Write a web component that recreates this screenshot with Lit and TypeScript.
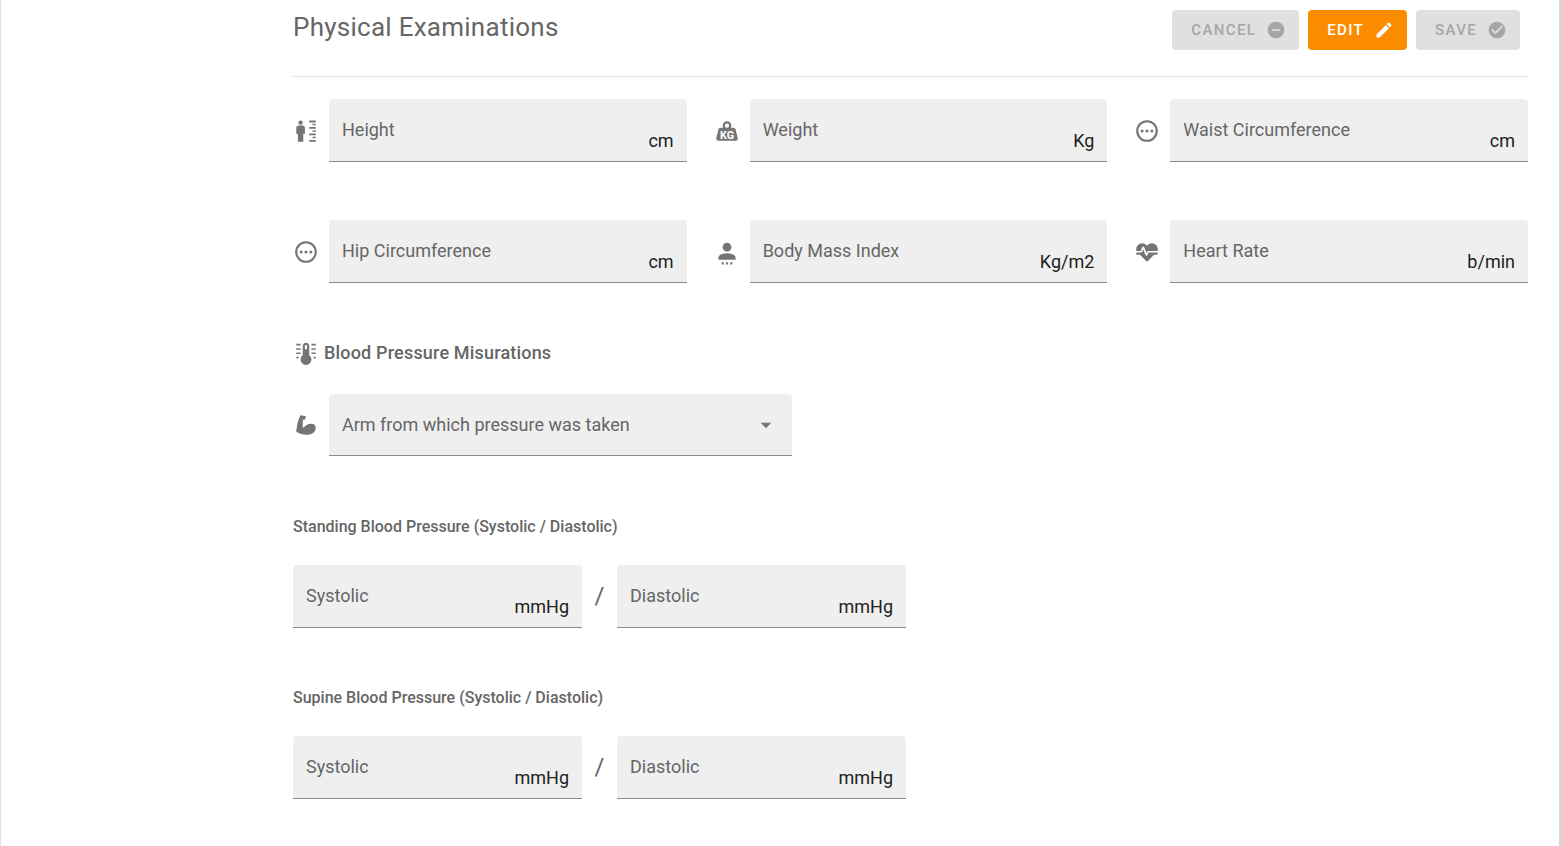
import { LitElement, html, css, svg, nothing } from "lit";
import { customElement, property } from "lit/decorators.js";

const dot = (cx: number) => svg`<circle cx=${cx} cy="12" r="1.4" />`;

const icons: Record<string, unknown> = {
  cancel: svg`<path d="M17,13H7V11H17M12,2A10,10 0 0,0 2,12A10,10 0 0,0 12,22A10,10 0 0,0 22,12A10,10 0 0,0 12,2Z" />`,
  edit: svg`<path d="M20.71,7.04C21.1,6.65 21.1,6 20.71,5.63L18.37,3.29C18,2.9 17.35,2.9 16.96,3.29L15.12,5.12L18.87,8.87M3,17.25V21H6.75L17.81,9.93L14.06,6.18L3,17.25Z" />`,
  save: svg`<path d="M12 2C6.5 2 2 6.5 2 12S6.5 22 12 22 22 17.5 22 12 17.5 2 12 2M10 17L5 12L6.41 10.59L10 14.17L17.59 6.58L19 8L10 17Z" />`,
  height: svg`<circle cx="7" cy="4.300" r="2" /><path d="M5 7H9A2 2 0 0 1 11 9V14.500H9.500V22H4.500V14.500H3V9A2 2 0 0 1 5 7Z" />
    <path d="M15 2.300H21V4.100H15ZM18 5.300H21V6.800H18ZM15 8.200H21V10H15ZM18 11.300H21V12.800H18ZM15 14.200H21V16H15ZM18 17.300H21V18.800H18ZM15 20.200H21V22H15Z" />`,
  weight: svg`<path fill-rule="evenodd" d="M12,3A4,4 0 0,1 16,7C16,7.73 15.81,8.41 15.46,9H18C18.95,9 19.75,9.67 19.95,10.56C21.96,18.57 22,18.78 22,19A2,2 0 0,1 20,21H4A2,2 0 0,1 2,19C2,18.78 2.04,18.57 4.05,10.56C4.25,9.67 5.05,9 6,9H8.54C8.19,8.41 8,7.73 8,7A4,4 0 0,1 12,3M12,5A2,2 0 0,0 10,7A2,2 0 0,0 12,9A2,2 0 0,0 14,7A2,2 0 0,0 12,5Z" />
    <text class="kg" x="12" y="19" text-anchor="middle">KG</text>`,
  circle: svg`<circle cx="12" cy="12" r="9" fill="none" stroke="currentColor" stroke-width="2" />${dot(7.5)}${dot(12)}${dot(16.5)}`,
  person: svg`<circle cx="12" cy="7.500" r="4" /><path d="M12 13.200C16.420 13.200 20 15 20 17.200V19.200H4V17.200C4 15 7.580 13.200 12 13.200ZM7 21.500H9V23.500H7ZM11 21.500H13V23.500H11ZM15 21.500H17V23.500H15Z" />`,
  heart: svg`<path d="M7.5,4A5.5,5.5 0 0,0 2,9.5C2,10 2.09,10.5 2.22,11H6.3L7.57,7.63C7.87,6.83 9.05,6.75 9.43,7.63L11.5,13L12.09,11.58C12.22,11.25 12.57,11 13,11H21.78C21.91,10.5 22,10 22,9.5A5.5,5.5 0 0,0 16.5,4C14.64,4 13,4.93 12,6.34C11,4.93 9.36,4 7.5,4V4M3,12.5A1,1 0 0,0 2,13.5A1,1 0 0,0 3,14.5H5.44L11,20C12,20.9 12,20.9 13,20L18.56,14.5H21A1,1 0 0,0 22,13.5A1,1 0 0,0 21,12.5H13.4L12.47,14.8C12.07,15.81 10.92,15.67 10.55,14.83L8.5,9.5L7.54,11.83C7.39,12.21 7.05,12.5 6.6,12.5H3Z" />`,
  thermometer: svg`<path fill-rule="evenodd" d="M17 18C17 20.760 14.760 23 12 23S7 20.760 7 18C7 16.360 7.790 14.910 9 14V5.500C9 3.840 10.340 2.500 12 2.500S15 3.840 15 5.500V14C16.210 14.910 17 16.360 17 18M11 8.500H13V5.500C13 4.950 12.550 4.500 12 4.500S11 4.950 11 5.500Z" />
    <path d="M17 3.500H21V5H17ZM17 7.500H21V9H17ZM17 11.500H21V13H17ZM21 15.500V17H19.200L18.600 15.500ZM3 3.500H7V5H3ZM3 7.500H7V9H3ZM3 11.500H7V13H3ZM3 15.500H5.400L4.800 17H3Z" />`,
  arm: svg`<path d="M3 18.34C3 18.34 4 7.09 7 3L12 4L11 7.09H9V14.25H10C12 11.18 16.14 10.06 18.64 11.18C21.94 12.71 21.64 17.32 18.64 19.36C16.24 21 9 22.43 3 18.34Z" />`,
  menu: svg`<path d="M7,10L12,15L17,10H7Z" />`,
};

@customElement("app-icon")
class AppIcon extends LitElement {
  static styles = css`
    :host { display: block; flex: none; width: 26px; height: 26px; }
    .icon { display: block; width: 100%; height: 100%; fill: currentColor; }
    .kg { font: bold 10px "Roboto", sans-serif; fill: #fff; }
  `;
  @property() name = "";
  render() {
    return html`<svg class="icon" viewBox="0 0 24 24" aria-hidden="true">${icons[this.name]}</svg>`;
  }
}

@customElement("unit-field")
class UnitField extends LitElement {
  static styles = css`
    :host { display: flex; align-items: center; gap: 10px; min-width: 0; color: #757575; }
    .box {
      flex: 1; min-width: 0; box-sizing: border-box; height: 63px; padding: 0 13px;
      display: flex; align-items: center;
      background: #efefef; border-bottom: 1px solid #8a8a8a; border-radius: 4px 4px 0 0;
    }
    .label { color: #666; white-space: nowrap; }
    .input {
      flex: 1; min-width: 0; width: 0; height: 40px; padding: 0; border: 0; outline: 0;
      background: none; font: inherit; color: #212121; text-align: right;
    }
    .unit { padding-top: 22px; color: #212121; }
  `;
  @property() icon = "";
  @property() label = "";
  @property() unit = "";
  render() {
    return html`
      ${this.icon ? html`<app-icon name=${this.icon}></app-icon>` : nothing}
      <div class="box">
        <label class="label" for="value">${this.label}</label>
        <input class="input" id="value" type="text" inputmode="decimal" readonly />
        <span class="unit">${this.unit}</span>
      </div>
    `;
  }
}

const measurements = [
  ["height", "Height", "cm"],
  ["weight", "Weight", "Kg"],
  ["circle", "Waist Circumference", "cm"],
  ["circle", "Hip Circumference", "cm"],
  ["person", "Body Mass Index", "Kg/m2"],
  ["heart", "Heart Rate", "b/min"],
];

@customElement("app-root")
class AppRoot extends LitElement {
  static styles = css`
    :host {
      display: block; box-sizing: border-box; min-height: 100vh;
      padding: 10px 31px 47px 292px;
      border-left: 1px solid #e0e0e0; border-right: 3px solid #d6d6d6;
      background: #fff; color: #666;
      font: 400 18px/22px "Roboto", sans-serif;
    }
    .header {
      display: flex; justify-content: space-between; align-items: flex-start;
      height: 66px; border-bottom: 1px solid #e0e0e0;
    }
    .title { margin: 0; font-size: 26px; line-height: 34px; font-weight: 400; letter-spacing: 0.01em; }
    .actions { display: flex; gap: 9px; padding-right: 8px; }
    .button {
      display: flex; align-items: center; gap: 10px; height: 40px; padding: 0 13px 0 19px;
      border: 0; border-radius: 4px; background: #fb8c00; color: #fff;
      font: 500 15px/20px "Roboto", sans-serif; letter-spacing: 0.09em;
    }
    .button:disabled { background: #e0e0e0; color: #a6a6a6; }
    .button app-icon { width: 20px; height: 20px; }
    .grid {
      display: grid; grid-template-columns: repeat(3, minmax(0, 1fr));
      gap: 58px 27px; margin-top: 22px;
    }
    .section {
      display: flex; align-items: center; gap: 5px; margin: 57px 0 28px;
      font-size: 18px; line-height: 26px; font-weight: 500; letter-spacing: 0.01em;
    }
    .section app-icon, .arm app-icon { color: #757575; }
    .arm { display: flex; align-items: center; gap: 10px; max-width: 499px; margin-bottom: 60px; }
    .choice {
      flex: 1; box-sizing: border-box; height: 62px; padding: 0 13px;
      display: flex; align-items: center;
      background: #efefef; border-bottom: 1px solid #8a8a8a; border-radius: 4px 4px 0 0;
    }
    .select {
      appearance: none; flex: 1; min-width: 0; height: 40px; border: 0; outline: 0;
      background: none; font: inherit; color: #212121;
    }
    .subtitle { margin: 59px 0 27px; font-size: 16px; line-height: 22px; font-weight: 500; }
    .pair {
      display: grid; grid-template-columns: 1fr 35px 1fr; align-items: center; max-width: 613px;
    }
    .slash { text-align: center; font-size: 24px; padding-bottom: 2px; }
  `;

  pressure(title: string) {
    return html`
      <h3 class="subtitle">${title}</h3>
      <div class="pair">
        <unit-field label="Systolic" unit="mmHg"></unit-field>
        <span class="slash">/</span>
        <unit-field label="Diastolic" unit="mmHg"></unit-field>
      </div>
    `;
  }

  render() {
    return html`
      <header class="header">
        <h1 class="title">Physical Examinations</h1>
        <div class="actions">
          <button class="button" disabled>CANCEL<app-icon name="cancel"></app-icon></button>
          <button class="button">EDIT<app-icon name="edit"></app-icon></button>
          <button class="button" disabled>SAVE<app-icon name="save"></app-icon></button>
        </div>
      </header>
      <div class="grid">
        ${measurements.map(([icon, label, unit]) => html`
          <unit-field icon=${icon} label=${label} unit=${unit}></unit-field>`)}
      </div>
      <h2 class="section"><app-icon name="thermometer"></app-icon>Blood Pressure Misurations</h2>
      <div class="arm">
        <app-icon name="arm"></app-icon>
        <div class="choice">
          <label for="arm">Arm from which pressure was taken</label>
          <select class="select" id="arm">
            <option value=""></option>
            <option>Left</option>
            <option>Right</option>
          </select>
          <app-icon name="menu"></app-icon>
        </div>
      </div>
      ${this.pressure("Standing Blood Pressure (Systolic / Diastolic)")}
      ${this.pressure("Supine Blood Pressure (Systolic / Diastolic)")}
    `;
  }
}
